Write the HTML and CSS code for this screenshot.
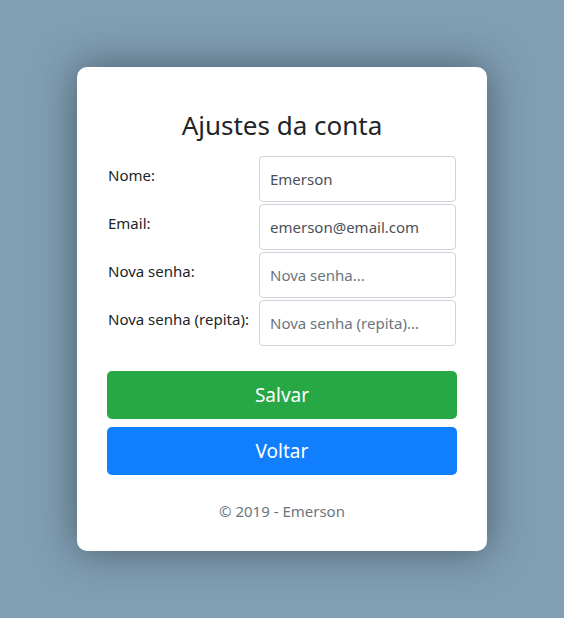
FILE: index.html
```html
<!DOCTYPE html>
<html lang="pt">
<head>
<meta charset="utf-8">
<link rel="stylesheet" href="styles.css">
<title>Ajustes da conta</title>
</head>
<body>
<main class="card">
  <h1 class="title">Ajustes da conta</h1>
  <form class="form">
    <div class="row">
      <label class="label">Nome:</label>
      <input class="input" type="text" value="Emerson">
    </div>
    <div class="row">
      <label class="label">Email:</label>
      <input class="input" type="text" value="emerson@email.com">
    </div>
    <div class="row">
      <label class="label">Nova senha:</label>
      <input class="input" type="password" placeholder="Nova senha...">
    </div>
    <div class="row">
      <label class="label">Nova senha (repita):</label>
      <input class="input" type="password" placeholder="Nova senha (repita)...">
    </div>
    <div class="actions">
      <button type="button" class="btn btn-green">Salvar</button>
      <button type="button" class="btn btn-blue">Voltar</button>
    </div>
  </form>
  <p class="footer">© 2019 - Emerson</p>
</main>
</body>
</html>
```
FILE: styles.css
```css
html, body {
  margin: 0;
  height: 100%;
}
body {
  background: #819eb3;
  display: flex;
  align-items: center;
  justify-content: center;
  font-family: "Noto Sans", "Open Sans", sans-serif;
  color: #212529;
}
.card {
  width: 410px;
  height: 484px;
  box-sizing: border-box;
  background: #fff;
  border-radius: 10px;
  box-shadow: 0 0 40px rgba(30, 40, 50, 0.55);
  padding: 38px 30px 0;
}
.title {
  margin: 0 0 11px;
  text-align: center;
  font-weight: 400;
  font-size: 26px;
  line-height: 40px;
}
.form {
  display: flex;
  flex-direction: column;
  gap: 2px;
}
.row {
  display: flex;
  align-items: flex-start;
  padding-left: 1px;
}
.label {
  width: 151px;
  font-size: 15px;
  line-height: 20px;
  padding-top: 9px;
}
.input {
  width: 197px;
  height: 46px;
  box-sizing: border-box;
  border: 1px solid #ced4da;
  border-radius: 4px;
  padding: 0 10px;
  font-family: inherit;
  font-size: 15px;
  color: #495057;
  background: #fff;
}
.input::placeholder {
  color: #6c757d;
  opacity: 1;
}
.actions {
  display: flex;
  flex-direction: column;
  gap: 8px;
  margin-top: 23px;
}
.btn {
  height: 48px;
  border: none;
  border-radius: 5px;
  color: #fff;
  font-family: inherit;
  font-size: 19px;
  width: 350px;
}
.btn-green { background: #28a745; }
.btn-blue { background: #117efe; }
.footer {
  margin: 26px 0 0;
  text-align: center;
  color: #6c757d;
  font-size: 15px;
}
```
